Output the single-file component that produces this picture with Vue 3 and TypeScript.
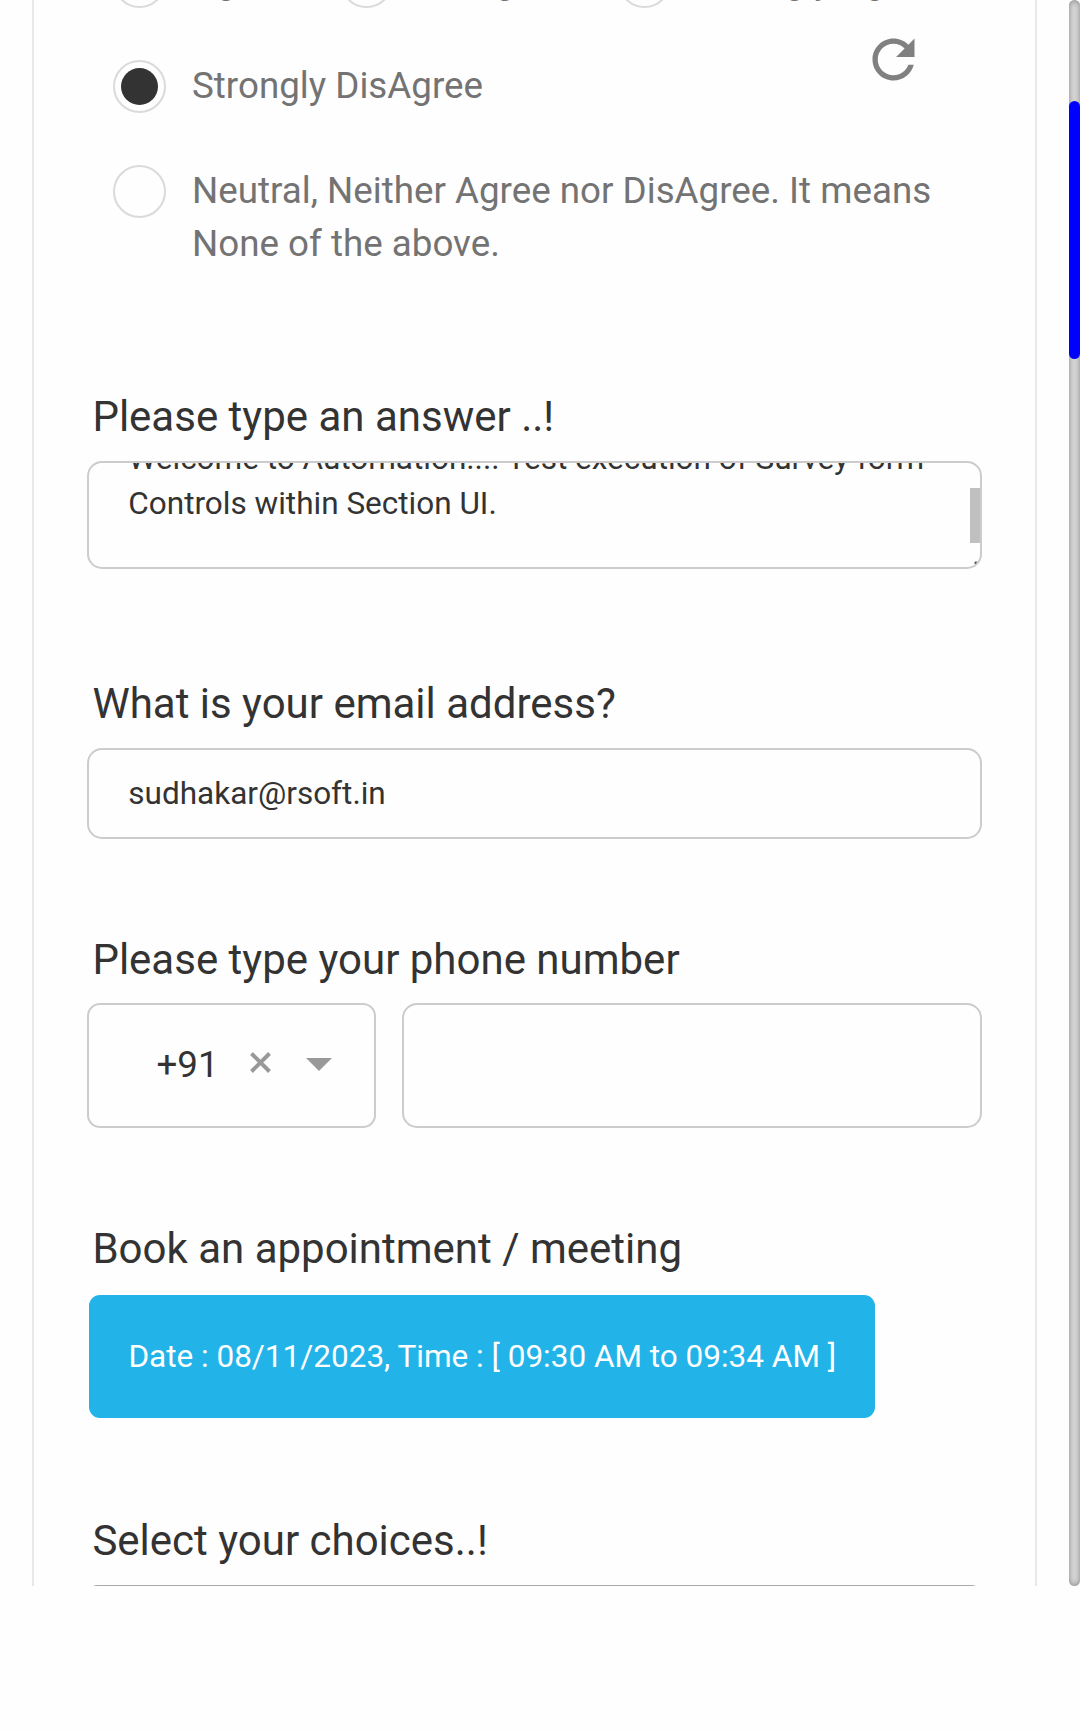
<script setup lang="ts">
import { ref } from 'vue'

interface Option {
  id: string
  label: string
}

const inlineOptions: Option[] = [
  { id: 'agree', label: 'Agree' },
  { id: 'disagree', label: 'DisAgree' },
  { id: 'strongly-agree', label: 'Strongly Agree' },
]
const stackedOptions: Option[] = [
  { id: 'strongly-disagree', label: 'Strongly DisAgree' },
  { id: 'neutral', label: 'Neutral, Neither Agree nor DisAgree. It means None of the above.' },
]

const selected = ref('strongly-disagree')
const answer = 'Welcome to Automation.... Test execution of Survey form Controls within Section UI.'
const email = 'sudhakar@rsoft.in'
const dialCode = ref('+91')
const appointment = 'Date : 08/11/2023, Time : [ 09:30 AM to 09:34 AM ]'
</script>

<template>
  <div class="page">
    <div class="viewport">
      <main class="card">
        <section class="options">
          <div class="row">
            <div v-for="o in inlineOptions" :key="o.id" class="option" @click="selected = o.id">
              <span class="radio" :class="{ on: selected === o.id }"></span>
              <span>{{ o.label }}</span>
            </div>
          </div>
          <div v-for="o in stackedOptions" :key="o.id" class="option stacked" @click="selected = o.id">
            <span class="radio" :class="{ on: selected === o.id }"></span>
            <span>{{ o.label }}</span>
          </div>
          <svg class="refresh" viewBox="0 0 24 24" fill="#808080">
            <path d="M17.65 6.35C16.2 4.9 14.21 4 12 4c-4.42 0-7.99 3.58-7.99 8s3.57 8 7.99 8c3.73 0 6.84-2.55 7.73-6h-2.08c-.82 2.33-3.04 4-5.65 4-3.31 0-6-2.69-6-6s2.69-6 6-6c1.66 0 3.14.69 4.22 1.78L13 11h7V4l-2.35 2.35z" />
          </svg>
        </section>

        <section class="field f-answer">
          <h2>Please type an answer ..!</h2>
          <div class="box textarea">
            <p>{{ answer }}</p>
            <span class="thumb"></span>
            <svg class="grip" viewBox="0 0 4 4"><path d="M2 0L4 2L2 4L0 2Z" fill="#555" /></svg>
          </div>
        </section>

        <section class="field f-email">
          <h2>What is your email address?</h2>
          <div class="box email">{{ email }}</div>
        </section>

        <section class="field f-phone">
          <h2>Please type your phone number</h2>
          <div class="phone">
            <div class="box code">
              <span class="dial">{{ dialCode }}</span>
              <svg class="clear" viewBox="0 0 21 21"><path d="M1.5 1.5L19.5 19.5M19.5 1.5L1.5 19.5" stroke="#999" stroke-width="4" /></svg>
              <svg class="caret" viewBox="0 0 26 13"><path d="M0 0H26L13 13Z" fill="#999" /></svg>
            </div>
            <div class="box number"></div>
          </div>
        </section>

        <section class="field f-book">
          <h2>Book an appointment / meeting</h2>
          <button class="slot">{{ appointment }}</button>
        </section>

        <section class="field f-choices">
          <h2>Select your choices..!</h2>
          <div class="box select"></div>
        </section>
      </main>
      <div class="track"><div class="bar"></div></div>
    </div>
  </div>
</template>

<style>
body {
  margin: 0;
  background: #fefefe;
}
</style>

<style scoped>
.page {
  width: 1080px;
  height: 1731px;
  overflow: hidden;
  background: #fefefe;
  font-family: Roboto, sans-serif;
  color: #333;
}
.page * {
  box-sizing: border-box;
}
.viewport {
  height: 1586px;
  display: flex;
  justify-content: space-between;
  padding-left: 32px;
  overflow: hidden;
}
.card {
  width: 1005px;
  height: 1700px;
  flex: none;
  padding: 0 53px;
  border: solid #e8e8e8;
  border-width: 0 2px;
}
.options {
  position: relative;
  display: flex;
  flex-direction: column;
  height: 392px;
  padding-left: 26px;
  color: #737373;
  font-size: 36.75px;
  line-height: 53px;
}
.row {
  display: flex;
  gap: 52px;
  margin-top: -46px;
  margin-bottom: 52px;
}
.option {
  display: flex;
  flex: none;
  gap: 26px;
  white-space: nowrap;
}
.option.stacked {
  width: 850px;
  white-space: normal;
  margin-bottom: 52px;
}
.radio {
  flex: none;
  width: 53px;
  height: 53px;
  margin-top: 1px;
  margin-bottom: -1px;
  border: 2px solid #dadada;
  border-radius: 50%;
  display: flex;
  align-items: center;
  justify-content: center;
}
.radio.on::after {
  content: '';
  width: 37px;
  height: 37px;
  border-radius: 50%;
  background: #333;
}
.refresh {
  position: absolute;
  left: 774.7px;
  top: 28px;
  width: 63px;
  height: 63px;
}
h2 {
  margin: 0;
  padding-left: 5.4px;
  font-size: 42px;
  font-weight: 400;
  line-height: 49px;
  white-space: nowrap;
}
.box {
  border: 2px solid #ccc;
  border-radius: 15px;
  font-size: 31.5px;
}
.f-answer {
  height: 287px;
}
.textarea {
  position: relative;
  height: 108px;
  margin-top: 20px;
  overflow: hidden;
}
.textarea p {
  margin: -27px 0 0;
  padding: 0 40px 0 39.3px;
  line-height: 45px;
}
.thumb {
  position: absolute;
  right: 0;
  top: 25px;
  width: 10px;
  height: 55px;
  background: #c0c0c0;
}
.grip {
  position: absolute;
  right: 2px;
  bottom: 2px;
  width: 4px;
  height: 4px;
}
.f-email {
  height: 256px;
}
.email {
  height: 91px;
  margin-top: 20px;
  padding-left: 39.3px;
  line-height: 88px;
}
.f-phone {
  height: 289px;
}
.phone {
  display: flex;
  gap: 26px;
  margin-top: 19px;
}
.code {
  width: 289px;
  height: 125px;
  display: flex;
  align-items: center;
  padding-left: 67.4px;
  padding-bottom: 3px;
  border-radius: 13px;
}
.dial {
  width: 94px;
  font-size: 36.75px;
  line-height: 43px;
}
.clear {
  width: 21px;
  height: 21px;
  margin-top: -3px;
  margin-right: 35px;
}
.caret {
  width: 26px;
  height: 13px;
}
.number {
  flex: 1;
  height: 125px;
}
.f-book {
  height: 292px;
}
.slot {
  display: block;
  width: 786px;
  height: 123px;
  margin: 22px 0 0 2px;
  padding: 0 0 0 39.4px;
  border: 0;
  border-radius: 11px;
  background: #22b3e9;
  color: #fff;
  font: 400 31.5px/123px Roboto, sans-serif;
  text-align: left;
  white-space: nowrap;
}
.select {
  height: 100px;
  margin-top: 20px;
  border-color: #aaa;
  border-radius: 10.5px;
}
.track {
  width: 11px;
  height: 1586px;
  padding-top: 101px;
  border-radius: 6px;
  background: #dadada;
  box-shadow: inset 0 0 6px #808080;
}
.bar {
  height: 258px;
  border-radius: 6px;
  background: #00f;
}
</style>
